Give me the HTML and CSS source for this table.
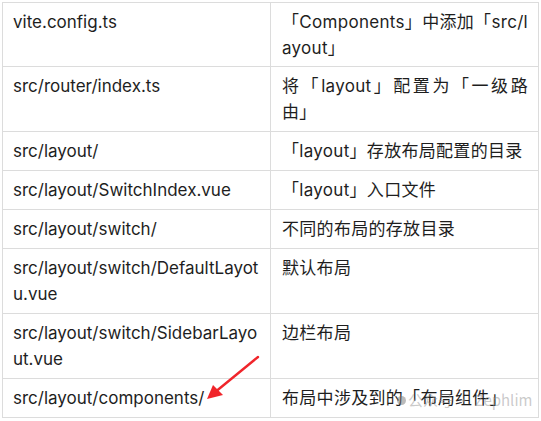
FILE: index.html
```html
<!DOCTYPE html>
<html lang="zh-CN">
<head>
<meta charset="utf-8">
<link rel="stylesheet" href="styles.css">
</head>
<body>
<div class="wrap">
<table class="files">
<colgroup><col class="c-path"><col class="c-desc"></colgroup>
<tbody>
<tr><td>vite.config.ts</td><td class="desc">「Components」中添加「src/layout」</td></tr>
<tr><td>src/router/index.ts</td><td class="desc">将「layout」配置为「一级路由」</td></tr>
<tr><td>src/layout/</td><td class="desc">「layout」存放布局配置的目录</td></tr>
<tr><td>src/layout/SwitchIndex.vue</td><td class="desc">「layout」入口文件</td></tr>
<tr><td>src/layout/switch/</td><td class="desc">不同的布局的存放目录</td></tr>
<tr><td>src/layout/switch/DefaultLayotu.vue</td><td class="desc">默认布局</td></tr>
<tr><td>src/layout/switch/SidebarLayout.vue</td><td class="desc">边栏布局</td></tr>
<tr><td>src/layout/components/</td><td class="desc">布局中涉及到的「布局组件」</td></tr>
</tbody>
</table>
<svg class="arrow" width="70" height="60" viewBox="0 0 70 60">
<line x1="62" y1="4" x2="18" y2="40" stroke="#f0252b" stroke-width="2.4" stroke-linecap="round"/>
<polygon points="11,46 17,32 27,42" fill="#f0252b"/>
</svg>
<div class="wm"><span class="wm-icon"></span><span class="wm-text">公众号 · Zephlim</span></div>
</div>
</body>
</html>
```
FILE: styles.css
```css
html, body {
  margin: 0;
  padding: 0;
  background: #ffffff;
}
.wrap {
  position: relative;
  padding: 2px 0 0 2px;
}
.files {
  border-collapse: collapse;
  width: 537px;
  table-layout: fixed;
  font-family: Inter, "Noto Sans CJK SC", sans-serif;
  font-size: 17px;
  line-height: 26px;
  color: #1e1e1e;
}
.c-path { width: 268px; }
.files td {
  border: 1px solid #dcdcdc;
  padding: 6px 10px 6px 10px;
  vertical-align: top;
  word-break: break-all;
  text-align: justify;
}
.files tr:first-child td {
  padding-bottom: 5px;
}
.files td.desc {
  padding-left: 11px;
  letter-spacing: 0.3px;
}
.arrow {
  position: absolute;
  left: 196px;
  top: 353px;
}
.wm {
  position: absolute;
  left: 397px;
  top: 390px;
  z-index: 2;
  display: flex;
  align-items: center;
  gap: 2px;
  white-space: nowrap;
  font-family: "Noto Sans CJK SC", sans-serif;
  font-size: 15px;
  line-height: 20px;
  color: rgba(150, 150, 150, 0.5);
}
.wm-icon {
  width: 9px;
  height: 9px;
  border-radius: 50%;
  background: rgba(120, 120, 120, 0.5);
}
```
